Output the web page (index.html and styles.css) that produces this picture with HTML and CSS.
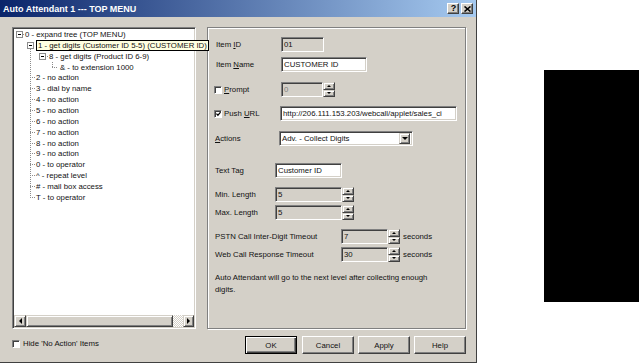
FILE: index.html
```html
<!DOCTYPE html>
<html>
<head>
<meta charset="utf-8">
<link rel="stylesheet" href="styles.css">
</head>
<body>
<div class="page">
  <div class="dialog">
    <div class="titlebar">
      <span class="title">Auto Attendant 1 --- TOP MENU</span>
      <span class="capbtns">
        <span class="capbtn q">?</span>
        <span class="capbtn"><svg width="7" height="6" viewBox="0 0 7 6"><path d="M0.5 0.5 L6.5 5.5 M6.5 0.5 L0.5 5.5" stroke="#000" stroke-width="1.6"/></svg></span>
      </span>
    </div>
    <div class="body">
      <div class="leftcol">
        <div class="tree">
          <div class="tree-items">
            <div class="row root"><span class="exp"></span><span class="hdash d1"></span><span class="txt">0 - expand tree (TOP MENU)</span></div>
            <div class="l1">
              <div class="row lv1box"><span class="exp"></span><span class="tip">1 - get digits (Customer ID 5-5) (CUSTOMER ID)</span></div>
              <div class="row lv2"><span class="exp"></span><span class="hdash d2"></span><span class="txt">8 - get digits (Product ID 6-9)</span></div>
              <div class="row lv3"><span class="corner"></span><span class="txt t3">&amp; - to extension 1000</span></div>
              <div class="row lv1"><span class="hdash d6"></span><span class="txt">2 - no action</span></div>
              <div class="row lv1"><span class="hdash d6"></span><span class="txt">3 - dial by name</span></div>
              <div class="row lv1"><span class="hdash d6"></span><span class="txt">4 - no action</span></div>
              <div class="row lv1"><span class="hdash d6"></span><span class="txt">5 - no action</span></div>
              <div class="row lv1"><span class="hdash d6"></span><span class="txt">6 - no action</span></div>
              <div class="row lv1"><span class="hdash d6"></span><span class="txt">7 - no action</span></div>
              <div class="row lv1"><span class="hdash d6"></span><span class="txt">8 - no action</span></div>
              <div class="row lv1"><span class="hdash d6"></span><span class="txt">9 - no action</span></div>
              <div class="row lv1"><span class="hdash d6"></span><span class="txt">0 - to operator</span></div>
              <div class="row lv1"><span class="hdash d6"></span><span class="txt">^ - repeat level</span></div>
              <div class="row lv1"><span class="hdash d6"></span><span class="txt"># - mail box access</span></div>
              <div class="row lv1"><span class="hdash d6"></span><span class="txt">T - to operator</span></div>
            </div>
          </div>
          <div class="hscroll">
            <span class="raised sbtn"><span class="arr-l"></span></span>
            <span class="raised thumb"></span>
            <span class="track"></span>
            <span class="raised sbtn"><span class="arr-r"></span></span>
          </div>
        </div>
        <div class="chkrow"><span class="chk"></span><span>Hide 'No Action' Items</span></div>
      </div>
      <div class="rightcol">
        <div class="group">
          <div class="f">
            <span class="lbl1">Item <u>I</u>D</span>
            <span class="inp dis w43">01</span>
          </div>
          <div class="f mt5">
            <span class="lbl1">Item <u>N</u>ame</span>
            <span class="inp w86">CUSTOMER ID</span>
          </div>
          <div class="f mt10">
            <span class="cbl"><span class="chk"></span><span><u>P</u>rompt</span></span>
            <span class="inp dis w42 gray">0</span>
            <span class="spin"><span class="raised sb"><span class="arr-u"></span></span><span class="raised sb"><span class="arr-d"></span></span></span>
          </div>
          <div class="f mt9">
            <span class="cbl cbl2"><span class="chk"><svg width="6" height="6" viewBox="0 0 6 6"><path d="M0.5 2.5 L2.3 4.5 L5.5 0.8" stroke="#000" stroke-width="1.4" fill="none"/></svg></span><span>Push <u>U</u>RL</span></span>
            <span class="inp w177">http://206.111.153.203/webcall/applet/sales_ci</span>
          </div>
          <div class="f mt10">
            <span class="lbl1 lbl1b"><u>A</u>ctions</span>
            <span class="inp sel w134"><span class="seltxt">Adv. - Collect Digits</span><span class="raised ddbtn"><span class="arr-d big"></span></span></span>
          </div>
          <div class="f mt17">
            <span class="lbl2">Text Tag</span>
            <span class="inp w67">Customer ID</span>
          </div>
          <div class="f mt9">
            <span class="lbl2">Min. Length</span>
            <span class="inp dis w67">5</span>
            <span class="spin"><span class="raised sb"><span class="arr-u"></span></span><span class="raised sb"><span class="arr-d"></span></span></span>
          </div>
          <div class="f mt3">
            <span class="lbl2">Max. Length</span>
            <span class="inp dis w67">5</span>
            <span class="spin"><span class="raised sb"><span class="arr-u"></span></span><span class="raised sb"><span class="arr-d"></span></span></span>
          </div>
          <div class="f mt9">
            <span class="lbl3">PSTN Call Inter-Digit Timeout</span>
            <span class="inp dis w47">7</span>
            <span class="spin"><span class="raised sb"><span class="arr-u"></span></span><span class="raised sb"><span class="arr-d"></span></span></span>
            <span class="secs">seconds</span>
          </div>
          <div class="f mt3">
            <span class="lbl3">Web Call Response Timeout</span>
            <span class="inp dis w47">30</span>
            <span class="spin"><span class="raised sb"><span class="arr-u"></span></span><span class="raised sb"><span class="arr-d"></span></span></span>
            <span class="secs">seconds</span>
          </div>
          <p class="note">Auto Attendant will go to the next level after collecting enough digits.</p>
        </div>
        <div class="btns">
          <span class="btn def">OK</span>
          <span class="btn">Cancel</span>
          <span class="btn">Apply</span>
          <span class="btn">Help</span>
        </div>
      </div>
    </div>
  </div>
  <div class="blackbox"></div>
</div>
</body>
</html>
```
FILE: styles.css
```css
* { box-sizing: border-box; }
body {
  margin: 0;
  background: #fff;
  font-family: "Liberation Sans", Arial, sans-serif;
  font-size: 7.8px;
  color: #111;
}
.page {
  display: flex;
  align-items: flex-start;
  width: 639px;
  height: 364px;
  overflow: hidden;
}
.dialog {
  width: 477px;
  height: 363px;
  flex-shrink: 0;
  background: #d4d0c8;
  border-right: 1px solid #404040;
  border-bottom: 1px solid #404040;
  display: flex;
  flex-direction: column;
}
.titlebar {
  height: 17px;
  background: linear-gradient(to right, #0a246a, #a6caf0);
  display: flex;
  align-items: center;
  padding: 0 3px 0 3px;
  color: #fff;
}
.title {
  flex: 1;
  font-weight: bold;
  font-size: 9px;
  white-space: nowrap;
}
.capbtns { display: flex; gap: 2px; }
.capbtn {
  width: 12px;
  height: 11px;
  background: #d4d0c8;
  border: 1px solid;
  border-color: #fff #404040 #404040 #fff;
  box-shadow: inset -1px -1px #808080;
  display: flex;
  align-items: center;
  justify-content: center;
  color: #000;
  font-weight: bold;
  font-size: 9px;
  line-height: 1;
}
.capbtn.q { padding-left: 1px; }

.body {
  display: flex;
  gap: 11px;
  padding: 10px 10px 0 12px;
}
.leftcol {
  width: 184px;
  display: flex;
  flex-direction: column;
}
.tree {
  height: 302px;
  background: #fff;
  border: 1px solid;
  border-color: #808080 #fff #fff #808080;
  box-shadow: inset 1px 1px #404040, inset -1px -1px #d4d0c8;
  padding: 1px;
  display: flex;
  flex-direction: column;
}
.tree-items { flex: 1; }
.row {
  display: flex;
  align-items: center;
  height: 10.87px;
  white-space: nowrap;
}
.l1 {
  background-image: repeating-linear-gradient(to bottom, #8c8c8c 0 1px, transparent 1px 2px);
  background-repeat: no-repeat;
  background-position: 16px 7px;
  background-size: 1px 150px;
}
.exp {
  width: 7px;
  height: 7px;
  flex-shrink: 0;
  border: 1px solid #8c8c8c;
  background: #fff linear-gradient(#000, #000) center / 3px 1px no-repeat;
}
.hdash {
  height: 1px;
  flex-shrink: 0;
  background-image: repeating-linear-gradient(to right, #8c8c8c 0 1px, transparent 1px 2px);
}
.d1 { width: 1px; margin-right: 1px; }
.d2 { width: 2px; margin-left: 1px; }
.d6 { width: 6px; }
.corner {
  width: 5px;
  height: 100%;
  flex-shrink: 0;
  background:
    repeating-linear-gradient(to bottom, #8c8c8c 0 1px, transparent 1px 2px) 0 0 / 1px 50% no-repeat,
    repeating-linear-gradient(to right, #8c8c8c 0 1px, transparent 1px 2px) 0 50% / 100% 1px no-repeat;
}
.root { padding-left: 2px; }
.lv1box { padding-left: 13px; }
.lv1 { padding-left: 16px; }
.lv2 { padding-left: 25px; }
.lv3 { padding-left: 38px; }
.t3 { margin-left: 3px; }
.tip {
  margin-left: 2px;
  height: 11px;
  line-height: 9px;
  background: #ffffe1;
  border: 1px solid #000;
  padding: 0 1px;
  position: relative;
  z-index: 2;
}
.hscroll { height: 12px; display: flex; }
.raised {
  background: #d4d0c8;
  border: 1px solid;
  border-color: #d4d0c8 #404040 #404040 #d4d0c8;
  box-shadow: inset 1px 1px #fff, inset -1px -1px #808080;
  display: flex;
  align-items: center;
  justify-content: center;
}
.sbtn { width: 12px; height: 12px; }
.sbtn:last-child { width: 11px; }
.thumb { width: 147px; height: 12px; }
.track {
  width: 10px;
  height: 12px;
  background: repeating-conic-gradient(#d4d0c8 0 25%, #fff 0 50%) 0 0 / 2px 2px;
}
.arr-l { width: 0; height: 0; border-top: 3px solid transparent; border-bottom: 3px solid transparent; border-right: 3px solid #000; }
.arr-r { width: 0; height: 0; border-top: 3px solid transparent; border-bottom: 3px solid transparent; border-left: 3px solid #000; }
.arr-u { width: 0; height: 0; border-left: 2px solid transparent; border-right: 2px solid transparent; border-bottom: 2px solid #000; }
.arr-d { width: 0; height: 0; border-left: 2px solid transparent; border-right: 2px solid transparent; border-top: 2px solid #000; }
.arr-d.big { border-left-width: 3px; border-right-width: 3px; border-top-width: 3px; }

.chkrow {
  display: flex;
  align-items: center;
  gap: 3px;
  margin-top: 10px;
}
.chk {
  width: 8px;
  height: 8px;
  flex-shrink: 0;
  background: #fff;
  border: 1px solid;
  border-color: #808080 #fff #fff #808080;
  box-shadow: inset 1px 1px #404040;
  display: flex;
  align-items: center;
  justify-content: center;
  padding: 0 0 0 1px;
}
.chk svg { display: block; }

.rightcol {
  width: 259px;
  display: flex;
  flex-direction: column;
}
.group {
  height: 302px;
  border: 1px solid #808080;
  box-shadow: inset 1px 1px #fff, 1px 1px #fff;
  padding: 9px 0 0 8px;
}
.f {
  display: flex;
  align-items: center;
  height: 15px;
  white-space: nowrap;
}
.mt3 { margin-top: 3px; }
.mt5 { margin-top: 5px; }
.mt9 { margin-top: 9px; }
.mt10 { margin-top: 10px; }
.mt17 { margin-top: 17px; }
.lbl1 { width: 65px; }
.lbl1b { width: 64px; margin-left: -1px; }
.lbl2 { width: 60px; margin-left: -1px; }
.lbl3 { width: 126px; margin-left: -1px; }
.cbl {
  width: 67px;
  margin-left: -2px;
  display: flex;
  align-items: center;
  gap: 2px;
}
.cbl2 { width: 66px; }
.inp {
  height: 15px;
  background: #fff;
  border: 1px solid;
  border-color: #808080 #fff #fff #808080;
  box-shadow: inset 1px 1px #404040, inset -1px -1px #d4d0c8;
  padding: 0 2px;
  display: flex;
  align-items: center;
  overflow: hidden;
  white-space: nowrap;
}
.dis { background: #d4d0c8; }
.gray { color: #808080; }
.w42 { width: 42px; }
.w43 { width: 43px; }
.w47 { width: 47px; }
.w67 { width: 67px; }
.w86 { width: 86px; }
.w134 { width: 134px; }
.w177 { width: 177px; }
.sel { padding-right: 2px; }
.seltxt { flex: 1; }
.ddbtn { width: 11px; height: 11px; flex-shrink: 0; }
.spin {
  width: 12px;
  height: 15px;
  display: flex;
  flex-direction: column;
}
.sb { flex: 1; }
.secs { margin-left: 3px; }
.note {
  margin: 10px 0 0 -1px;
  width: 232px;
  line-height: 12px;
}
.btns {
  display: flex;
  justify-content: flex-end;
  gap: 4px;
  margin-top: 7px;
}
.btn {
  width: 52px;
  height: 18px;
  background: #d4d0c8;
  border: 1px solid;
  border-color: #fff #404040 #404040 #fff;
  box-shadow: inset -1px -1px #808080;
  display: flex;
  align-items: center;
  justify-content: center;
}
.btn.def {
  margin-right: 1px;
  border-color: #000;
  box-shadow: inset 1px 1px #fff, inset -1px -1px #404040, inset -2px -2px #808080;
}
.blackbox {
  width: 95px;
  height: 232px;
  margin-top: 70px;
  margin-left: 67px;
  flex-shrink: 0;
  background: #000;
}
```
